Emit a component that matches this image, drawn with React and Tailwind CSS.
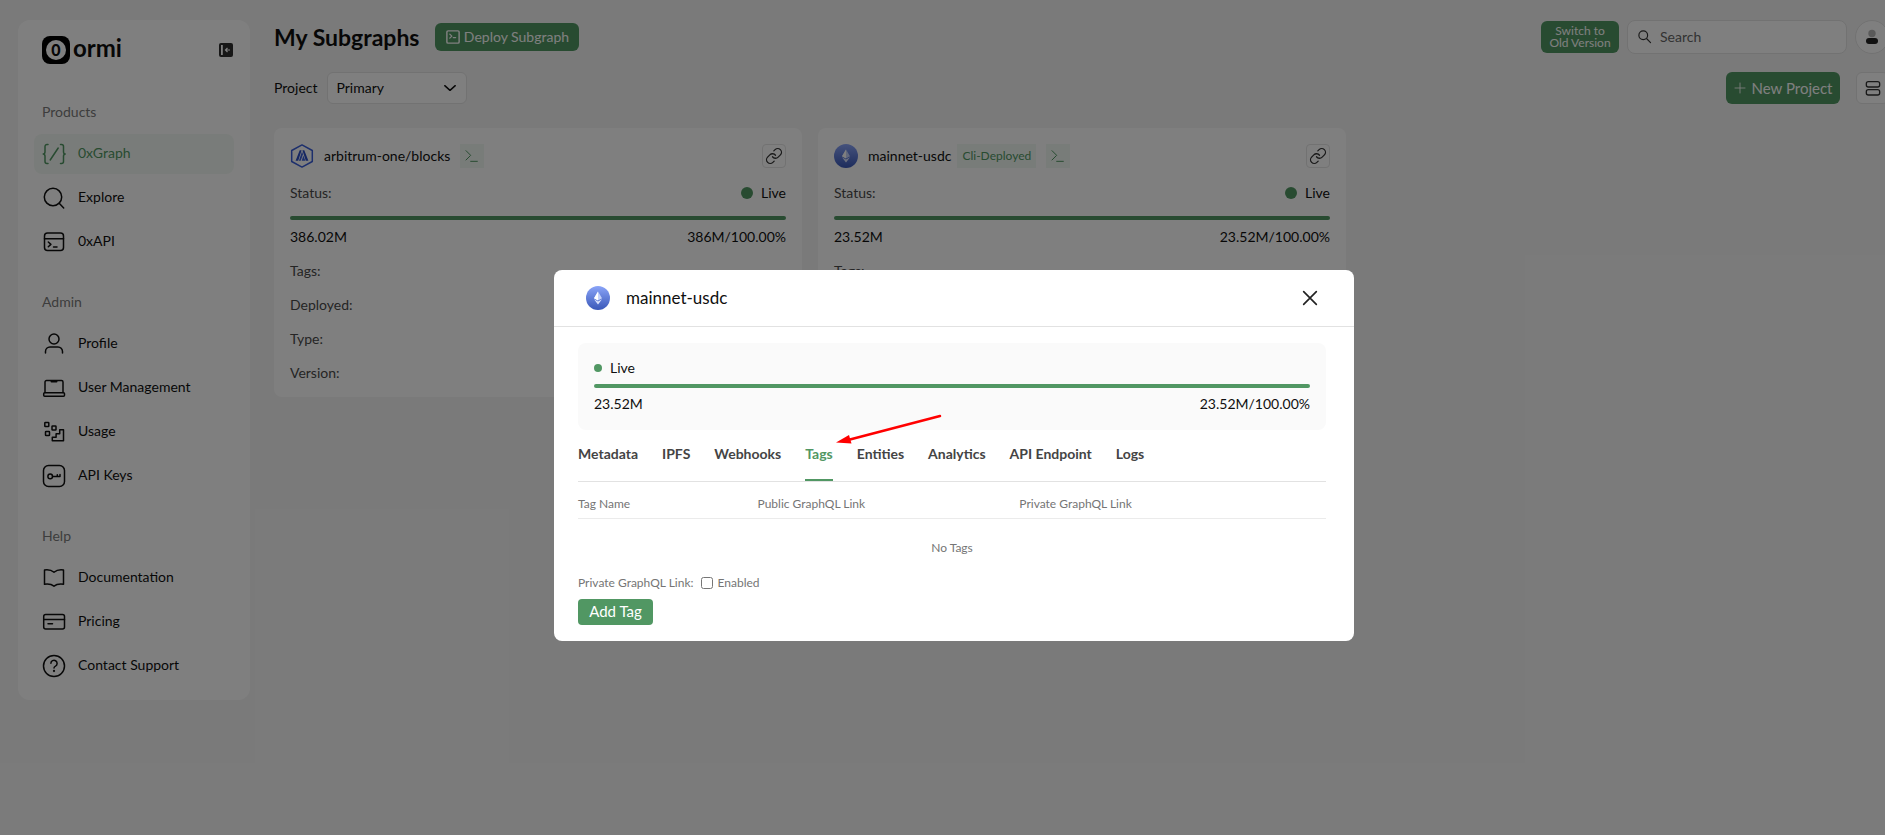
import { useState } from 'react';

const NAV_SECTIONS = [
  {
    title: 'Products',
    items: [
      { label: '0xGraph', icon: GraphIcon, active: true },
      { label: 'Explore', icon: ExploreIcon },
      { label: '0xAPI', icon: ApiIcon },
    ],
  },
  {
    title: 'Admin',
    items: [
      { label: 'Profile', icon: ProfileIcon },
      { label: 'User Management', icon: LaptopIcon },
      { label: 'Usage', icon: UsageIcon },
      { label: 'API Keys', icon: KeyIcon },
    ],
  },
  {
    title: 'Help',
    items: [
      { label: 'Documentation', icon: BookIcon },
      { label: 'Pricing', icon: CardIcon },
      { label: 'Contact Support', icon: HelpIcon },
    ],
  },
];

const SUBGRAPHS = [
  { name: 'arbitrum-one/blocks', icon: ArbitrumIcon, block: '386.02M', progress: '386M/100.00%' },
  { name: 'mainnet-usdc', icon: EthereumIcon, block: '23.52M', progress: '23.52M/100.00%', badge: 'Cli-Deployed' },
];

const DETAILS = ['Tags:', 'Deployed:', 'Type:', 'Version:'];

const TABS = ['Metadata', 'IPFS', 'Webhooks', 'Tags', 'Entities', 'Analytics', 'API Endpoint', 'Logs'];

function Icon({ children, className = 'w-6 h-6', strokeWidth = 1.5 }) {
  return (
    <svg viewBox="0 0 24 24" fill="none" stroke="currentColor" strokeWidth={strokeWidth} strokeLinecap="round" strokeLinejoin="round" className={`shrink-0 ${className}`} aria-hidden="true">
      {children}
    </svg>
  );
}

function GraphIcon() {
  return (
    <Icon>
      <path d="M6 2.5H5a2 2 0 0 0-2 2v5.2C3 11 2.400 12 1.200 12 2.400 12 3 13 3 14.300v5.200a2 2 0 0 0 2 2h1" />
      <path d="M18.500 2.500h1a2 2 0 0 1 2 2v5.200c0 1.300.600 2.300 1.800 2.300-1.200 0-1.800 1-1.800 2.300v5.200a2 2 0 0 1-2 2h-1" />
      <path d="M16.200 6 8.200 18" />
    </Icon>
  );
}

function ExploreIcon() {
  return <Icon><circle cx="11" cy="11" r="8.700" /><path d="m17.200 17.200 4.500 4.800" /></Icon>;
}

function ApiIcon() {
  return (
    <Icon>
      <rect x="2.500" y="3" width="19" height="17.500" rx="3" />
      <path d="M2.500 8.700h19M6.300 12l2.600 2.400-2.600 2.400M11.500 17h3.500" />
    </Icon>
  );
}

function ProfileIcon() {
  return <Icon><circle cx="12" cy="7" r="5" /><path d="M3.500 21v-1.500A4.500 4.500 0 0 1 8 15h8a4.500 4.500 0 0 1 4.500 4.500V21" /></Icon>;
}

function LaptopIcon() {
  return (
    <Icon>
      <path d="M3 16.500V6a1.500 1.500 0 0 1 1.500-1.500h15A1.500 1.500 0 0 1 21 6v10.500" />
      <rect x="1.700" y="16.700" width="20.800" height="3.500" rx="1" />
      <path d="M9.500 5.500h5" strokeWidth="2" />
    </Icon>
  );
}

function UsageIcon() {
  return (
    <Icon>
      <rect x="2.800" y="2.500" width="4" height="4" rx=".6" />
      <rect x="10" y="6" width="4" height="4" rx=".6" />
      <rect x="3.500" y="11.500" width="4" height="4" rx=".6" />
      <path d="M21.500 9.800v11h-11.200v-3.500h3.800v-3.600h3.600V9.800z" />
    </Icon>
  );
}

function KeyIcon() {
  return (
    <Icon>
      <rect x="1.500" y="1.500" width="21" height="21" rx="5" />
      <circle cx="8.200" cy="12.400" r="2.300" />
      <path d="M10.600 12.400h7.400v-2M15.300 12.300v-1.500" />
    </Icon>
  );
}

function BookIcon() {
  return (
    <Icon>
      <path d="M2.500 4c4-.6 7 .1 9.500 2.300C14.500 4.100 17.500 3.400 21.500 4v14.300c-4-.5-7.200 0-9.500 1.900-2.300-1.900-5.500-2.400-9.500-1.900z" />
    </Icon>
  );
}

function CardIcon() {
  return <Icon><rect x="1.700" y="4.500" width="20.800" height="14.500" rx="2" /><path d="M1.700 9.500h20.800M6 13.700h4.500" /></Icon>;
}

function HelpIcon() {
  return (
    <Icon>
      <circle cx="12" cy="12" r="10.500" />
      <path d="M8.900 9.300a3.100 3.100 0 1 1 4.600 2.800c-1 .5-1.500 1-1.500 2" />
      <circle cx="12" cy="17" r=".4" />
    </Icon>
  );
}

function TerminalIcon() {
  return <Icon className="w-3.5 h-3.5"><rect x="1.500" y="1.500" width="21" height="21" rx="2" strokeWidth="2.500" /><path d="m6.500 7 3.500 3.500L6.500 14M12.500 13h4" strokeWidth="2.200" /></Icon>;
}

function ArbitrumIcon() {
  return (
    <svg viewBox="0 0 24 24" className="w-6 h-6 shrink-0" aria-hidden="true">
      <path d="M12 .9 22.300 6.500v11L12 23.100 1.700 17.500v-11z" fill="#fff" stroke="#3b5fd9" strokeWidth="1.500" strokeLinejoin="round" />
      <path d="M9.700 6.200h1.900L8.200 16.800H5.600zM12.400 6.200h1.900l4.100 10.600h-2.600z" fill="#2d4fc4" />
      <path d="m12 7.500 1 2.700-2.300 6.600H8.900zM13.400 11.400l1.900 5.400h-3.600z" fill="#3b5fd9" />
    </svg>
  );
}

function EthereumIcon() {
  return (
    <svg viewBox="0 0 24 24" className="w-6 h-6 shrink-0" aria-hidden="true">
      <defs>
        <linearGradient id="eth" x1="0" y1="0" x2="0" y2="1">
          <stop offset="0" stopColor="#8aa4f8" />
          <stop offset="1" stopColor="#3a58b8" />
        </linearGradient>
      </defs>
      <circle cx="12" cy="12" r="12" fill="url(#eth)" />
      <path d="M12 5.500 8 12.200l4 2.400 4-2.400z" fill="#c5d2fb" />
      <path d="M12 5.500v9.100l-4-2.400z" fill="#fff" />
      <path d="m8 13.200 4 5.300 4-5.300-4 2.300z" fill="#dbe3fd" />
    </svg>
  );
}

function Sidebar() {
  return (
    <aside className="w-[232px] shrink-0 self-start bg-white rounded-xl px-4 pt-4 pb-3.5">
      <div className="flex items-center justify-between pl-2 pr-px">
        <div className="flex items-center gap-[3px]">
          <div className="w-7 h-7 rounded-lg bg-black flex items-center justify-center">
            <div className="w-5 h-5 rounded-full bg-white flex items-center justify-center text-base leading-none font-black">0</div>
          </div>
          <span className="text-2xl leading-6 pb-1 font-bold">ormi</span>
        </div>
        <button aria-label="Collapse sidebar">
          <svg viewBox="0 0 14 14" className="w-3.5 h-3.5" aria-hidden="true">
            <rect width="14" height="14" rx="2" fill="#2f2f2f" />
            <path d="M2 2h1.800v10H2z" fill="#fff" />
            <path d="M11 7H6.500M8.500 5l-2 2 2 2" fill="none" stroke="#fff" strokeWidth="1.200" />
          </svg>
        </button>
      </div>

      <nav className="mt-[38px] flex flex-col gap-[30px]">
        {NAV_SECTIONS.map(section => (
          <div key={section.title}>
            <h2 className="pl-2 mb-3 leading-5 text-[#7a7a7a]">{section.title}</h2>
            <div className="flex flex-col gap-1">
              {section.items.map(item => {
                const NavIcon = item.icon;
                return (
                  <a key={item.label} href="#" className={`flex items-center gap-3 h-10 px-2 rounded-lg ${item.active ? 'bg-[#f3f9f4] text-[#519763]' : 'text-[#0f0f0f]'}`}>
                    <NavIcon />
                    <span className="pb-0.5">{item.label}</span>
                  </a>
                );
              })}
            </div>
          </div>
        ))}
      </nav>
    </aside>
  );
}

function Header() {
  return (
    <header className="flex items-center h-[34px]">
      <h1 className="text-[23px] leading-8 font-bold">My Subgraphs</h1>
      <button className="ml-4 h-7 w-36 flex items-center justify-center gap-1 rounded-md bg-[#519763] text-white">
        <TerminalIcon />
        Deploy Subgraph
      </button>
      <button className="ml-auto w-[78px] h-8 rounded-md bg-[#519763] text-white text-xs leading-3">
        Switch to<br />Old Version
      </button>
      <label className="ml-2 w-[220px] h-[34px] px-2.5 flex items-center gap-2 bg-white border border-[#e4e4e4] rounded-lg">
        <Icon className="w-3.5 h-3.5 text-[#333]" strokeWidth={2}><circle cx="9" cy="9" r="7.500" /><path d="m15 15 6.500 6.500" /></Icon>
        <input type="text" placeholder="Search" aria-label="Search" className="w-full outline-none placeholder:text-[#666]" />
      </label>
      <button aria-label="Account" className="ml-2 w-[34px] h-[34px] rounded-full bg-white border border-[#e4e4e4] flex items-center justify-center">
        <svg viewBox="0 0 16 16" className="w-4 h-4" aria-hidden="true">
          <circle cx="8" cy="4.500" r="3.700" fill="#b5b5b5" />
          <rect x="2" y="9" width="12" height="6" rx="3" fill="#222" />
        </svg>
      </button>
    </header>
  );
}

function Toolbar() {
  return (
    <div className="mt-[18px] flex items-center h-8">
      <label htmlFor="project">Project</label>
      <div className="relative ml-2.5">
        <select id="project" className="appearance-none w-[140px] h-8 pl-2 pr-8 bg-white border border-[#e4e4e4] rounded-md">
          <option>Primary</option>
        </select>
        <Icon className="w-3.5 h-3.5 absolute right-2.5 top-[9px] pointer-events-none" strokeWidth={2.5}><path d="m3 8 9 8 9-8" /></Icon>
      </div>
      <button className="ml-auto h-8 w-[114px] flex items-center justify-center gap-1.5 rounded-md bg-[#519763] text-white text-[15px]">
        <Icon className="w-3 h-3" strokeWidth={1.7}><path d="M12 2v20M2 12h20" /></Icon>
        New Project
      </button>
      <button aria-label="Change view" className="ml-4 h-8 w-[33px] flex items-center justify-center rounded-md bg-white border border-[#e4e4e4] text-[#333]">
        <Icon className="w-4 h-4" strokeWidth={2}><rect x="2" y="2.500" width="20" height="8" rx="3" /><rect x="2" y="14.500" width="20" height="8" rx="3" /></Icon>
      </button>
    </div>
  );
}

function SubgraphCard({ subgraph }) {
  const NetworkIcon = subgraph.icon;
  return (
    <article className="flex-1 max-w-[528px] bg-white rounded-lg p-4">
      <div className="flex items-center h-6">
        <NetworkIcon />
        <h2 className="ml-2.5">{subgraph.name}</h2>
        {subgraph.badge && (
          <span className="ml-1.5 h-6 px-[5px] flex items-center bg-[#f0f9f3] text-[#519763] text-xs">{subgraph.badge}</span>
        )}
        <button aria-label="Open terminal" className="ml-2.5 w-6 h-6 flex items-center justify-center bg-[#f0f9f3] text-[#519763]">
          <Icon className="w-4 h-4"><path d="m3 4 7 7-7 7M10 20h10" strokeWidth="1.500" /></Icon>
        </button>
        <button aria-label="Copy link" className="ml-auto w-6 h-6 flex items-center justify-center border border-[#e4e4e4] rounded-sm text-[#333]">
          <Icon className="w-[18px] h-[18px]" strokeWidth={1.7}>
            <path d="M10 13a5 5 0 0 0 7.540.540l3-3a5 5 0 0 0-7.070-7.070l-1.720 1.710" />
            <path d="M14 11a5 5 0 0 0-7.540-.540l-3 3a5 5 0 0 0 7.070 7.070l1.710-1.710" />
          </Icon>
        </button>
      </div>
      <div className="mt-[15px] flex items-center justify-between h-5">
        <span className="text-[#4a4a4a]">Status:</span>
        <span className="flex items-center gap-2"><i className="w-3 h-3 rounded-full bg-[#519763]" />Live</span>
      </div>
      <div className="mt-[13px] h-1 rounded-full bg-[#519763]" />
      <div className="mt-[7px] flex justify-between leading-5">
        <span>{subgraph.block}</span>
        <span>{subgraph.progress}</span>
      </div>
      <ul className="mt-3.5 -mb-0.5 flex flex-col gap-3.5 text-[#4a4a4a] leading-5">
        {DETAILS.map(label => <li key={label}>{label}</li>)}
      </ul>
    </article>
  );
}

function TagsPanel() {
  return (
    <>
      <table className="w-full table-fixed text-xs leading-5 text-[#757575]">
        <thead>
          <tr className="border-b border-[#ebebeb] text-left">
            <th className="w-[24%] pt-3 pb-1 font-normal">Tag Name</th>
            <th className="w-[35%] pt-3 pb-1 font-normal">Public GraphQL Link</th>
            <th className="pt-3 pb-1 font-normal">Private GraphQL Link</th>
          </tr>
        </thead>
        <tbody>
          <tr><td colSpan={3} className="py-[19px] text-center">No Tags</td></tr>
        </tbody>
      </table>
      <div className="-mt-1 flex items-center h-5 text-xs text-[#757575]">
        <span>Private GraphQL Link:</span>
        <label className="ml-2 flex items-center gap-1">
          <input type="checkbox" className="w-3 h-3" />
          Enabled
        </label>
      </div>
      <button className="mt-1.5 w-[75px] h-[26px] pb-0.5 rounded-sm bg-[#519763] text-white text-[15px] leading-5">Add Tag</button>
    </>
  );
}

function SubgraphModal({ subgraph }) {
  const [activeTab, setActiveTab] = useState('Tags');

  return (
    <div className="absolute inset-0 bg-black/50 flex items-start justify-center pt-[270px]">
      <div role="dialog" aria-label={subgraph.name} className="relative w-[800px] bg-white rounded-lg">
        <div className="flex items-center h-[57px] pl-8 pr-9 border-b border-[#e2e2e2]">
          <EthereumIcon />
          <h2 className="ml-4 text-[17px]">{subgraph.name}</h2>
          <button aria-label="Close" className="ml-auto text-[#222]">
            <Icon className="w-4 h-4" strokeWidth={2.5}><path d="m2.500 2.500 19 19M21.500 2.500l-19 19" /></Icon>
          </button>
        </div>

        <div className="pl-6 pr-7 pt-4 pb-4">
          <div className="px-4 pt-[15px] pb-4 bg-[#fafafa] rounded-lg leading-5">
            <div className="flex items-center gap-2"><i className="w-2 h-2 rounded-full bg-[#519763]" />Live</div>
            <div className="mt-1.5 h-1 rounded-full bg-[#519763]" />
            <div className="mt-1.5 flex justify-between">
              <span>{subgraph.block}</span>
              <span>{subgraph.progress}</span>
            </div>
          </div>

          <div role="tablist" className="mt-3.5 flex gap-6 border-b border-[#e2e2e2] leading-5 font-bold">
            {TABS.map(tab => (
              <button
                key={tab}
                role="tab"
                aria-selected={tab === activeTab}
                onClick={() => setActiveTab(tab)}
                className={`pb-[15px] border-b-2 ${tab === activeTab ? 'border-[#519763] text-[#519763]' : 'border-transparent text-[#444]'}`}
              >
                {tab}
              </button>
            ))}
          </div>

          {activeTab === 'Tags' && <TagsPanel />}
        </div>

        <svg viewBox="0 0 108 32" className="absolute left-[280px] top-[144px] w-[108px] h-8 pointer-events-none" aria-hidden="true">
          <path d="M106 2 14 26" stroke="#ff0000" strokeWidth="2.500" strokeLinecap="round" />
          <path d="M2 28.500 15 21l2.500 8.500z" fill="#ff0000" />
        </svg>
      </div>
    </div>
  );
}

function App() {
  return (
    <div className="overflow-hidden">
      <div className="relative -mr-[23px] min-h-screen flex gap-6 bg-[#f5f5f5] pt-5 pl-[18px] pr-[19px] font-['Lato',sans-serif] text-sm leading-5 text-[#0f0f0f]">
        <Sidebar />
        <main className="flex-1 min-w-0">
          <Header />
          <Toolbar />
          <div className="mt-6 flex gap-4">
            {SUBGRAPHS.map(subgraph => <SubgraphCard key={subgraph.name} subgraph={subgraph} />)}
          </div>
        </main>
        <SubgraphModal subgraph={SUBGRAPHS[1]} />
      </div>
    </div>
  );
}

export default App;
